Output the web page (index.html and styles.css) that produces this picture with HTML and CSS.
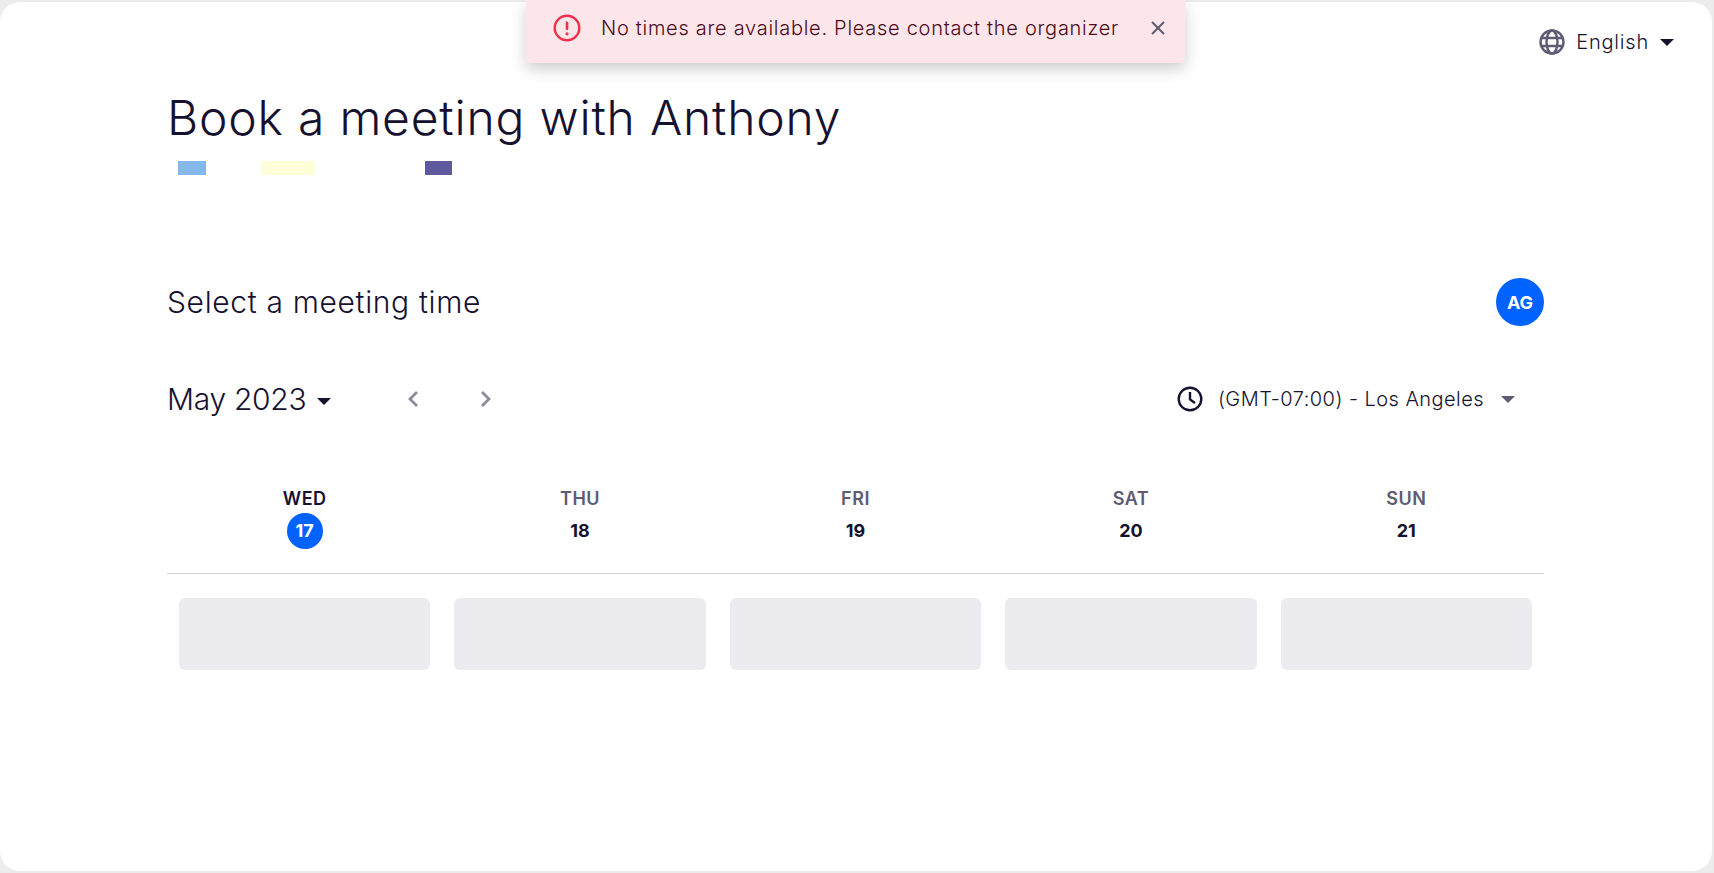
FILE: index.html
```html
<!DOCTYPE html>
<html lang="en">
<head>
    <meta charset="UTF-8">
    <title>Book a meeting with Anthony</title>
    <link rel="stylesheet" href="styles.css">
</head>
<body>

    <div class="card">
        <div class="alert">
            <svg class="alert-icon" viewBox="0 0 28 28" width="28" height="28">
                <circle cx="14" cy="14" r="12.3" fill="none" stroke="#f0304a" stroke-width="2.4"/>
                <rect x="12.7" y="7.5" width="2.6" height="8.5" rx="1.3" fill="#f0304a"/>
                <circle cx="14" cy="19.8" r="1.6" fill="#f0304a"/>
            </svg>
            <span class="alert-text">No times are available. Please contact the organizer</span>
            <svg class="alert-close" viewBox="0 0 14 14" width="14" height="14">
                <path d="M1 1 L13 13 M13 1 L1 13" fill="none" stroke="#5e5b72" stroke-width="2"/>
            </svg>
        </div>

        <div class="lang-bar">
            <svg class="globe" viewBox="0 0 26 26" width="26" height="26">
                <g fill="none" stroke="#5e5b72" stroke-width="2.4">
                    <circle cx="13" cy="13" r="11.5"/>
                    <ellipse cx="13" cy="13" rx="5.5" ry="11.5"/>
                    <path d="M2 9 H24 M2 17 H24"/>
                </g>
            </svg>
            <span class="lang-name">English</span>
            <span class="caret"></span>
        </div>

        <div class="content">
            <h1>Book a meeting with Anthony</h1>
            <div class="redacted">
                <span class="block block-blue"></span>
                <span class="block block-yellow"></span>
                <span class="block block-purple"></span>
            </div>

            <div class="select-row">
                <h2>Select a meeting time</h2>
                <div class="avatar">AG</div>
            </div>

            <div class="month-row">
                <div class="month">May 2023<span class="caret"></span></div>
                <div class="arrows">
                    <svg viewBox="0 0 12 18" width="12" height="18">
                        <path d="M10 2 L3 9 L10 16" fill="none" stroke="#8c8a9b" stroke-width="2.8"/>
                    </svg>
                    <svg viewBox="0 0 12 18" width="12" height="18">
                        <path d="M2 2 L9 9 L2 16" fill="none" stroke="#8c8a9b" stroke-width="2.8"/>
                    </svg>
                </div>
                <div class="timezone">
                    <svg viewBox="0 0 26 26" width="26" height="26">
                        <g fill="none" stroke="#16112f" stroke-width="2.4">
                            <circle cx="13" cy="13" r="11.3"/>
                            <path d="M13 6 V13.5 L18 17"/>
                        </g>
                    </svg>
                    <span>(GMT-07:00) - Los Angeles</span>
                    <span class="caret caret-grey"></span>
                </div>
            </div>

            <div class="days">
                <div class="day active"><div class="day-name">WED</div><div class="day-num">17</div></div>
                <div class="day"><div class="day-name">THU</div><div class="day-num">18</div></div>
                <div class="day"><div class="day-name">FRI</div><div class="day-num">19</div></div>
                <div class="day"><div class="day-name">SAT</div><div class="day-num">20</div></div>
                <div class="day"><div class="day-name">SUN</div><div class="day-num">21</div></div>
            </div>

            <div class="slots">
                <div class="slot"></div>
                <div class="slot"></div>
                <div class="slot"></div>
                <div class="slot"></div>
                <div class="slot"></div>
            </div>
        </div>
    </div>

</body>
</html>
```

FILE: styles.css
```css
html, body {
    height: 100%;
}

body {
    margin: 0;
    padding: 2px 2px 2px 0;
    box-sizing: border-box;
    overflow: hidden;
    background-color: #ececec;
    font-family: Inter, "Liberation Sans", sans-serif;
    color: #16112f;
}

.card {
    position: relative;
    height: 100%;
    background-color: #fff;
    border-radius: 20px;
    box-sizing: border-box;
}

.alert {
    position: absolute;
    top: -2px;
    left: 526px;
    width: 659px;
    height: 63px;
    box-sizing: border-box;
    padding: 0 20px 8px 27px;
    display: flex;
    align-items: center;
    background-color: #fce6e9;
    border-radius: 0 0 4px 4px;
    box-shadow: 0 6px 16px rgba(0, 0, 0, 0.2);
}

.alert-text {
    margin-left: 20px;
    flex: 1;
    font-size: 20px;
    font-weight: 300;
    letter-spacing: 0.72px;
    white-space: nowrap;
    color: #4d0a1a;
}

.lang-bar {
    display: flex;
    align-items: center;
    justify-content: flex-end;
    padding: 27px 38px 0 0;
    height: 26px;
}

.lang-name {
    margin-left: 11px;
    margin-right: 11px;
    font-size: 20px;
    font-weight: 300;
    letter-spacing: 0.8px;
}

.caret {
    display: inline-block;
    width: 0;
    height: 0;
    border-left: 7px solid transparent;
    border-right: 7px solid transparent;
    border-top: 7px solid #16112f;
    vertical-align: middle;
}

.month .caret {
    margin-left: 11px;
}

.caret-grey {
    border-top-color: #5e5b72;
    margin-left: 2px;
}

.content {
    padding: 0 168px 0 167px;
}

h1 {
    margin: 33px 0 0;
    font-size: 48px;
    line-height: 60px;
    font-weight: 300;
    letter-spacing: 0.8px;
}

.redacted {
    display: flex;
    margin-top: 13px;
    height: 14px;
}

.block {
    display: block;
    height: 14px;
}

.block-blue {
    width: 28px;
    margin-left: 11px;
    background-color: #83b8e8;
}

.block-yellow {
    width: 54px;
    margin-left: 55px;
    background-color: #feffd9;
}

.block-purple {
    width: 27px;
    margin-left: 110px;
    background-color: #5f5a9e;
}

.select-row {
    display: flex;
    justify-content: space-between;
    align-items: center;
    margin-top: 103px;
}

h2 {
    margin: 0;
    font-size: 30px;
    font-weight: 300;
    letter-spacing: 0.65px;
}

.avatar {
    width: 48px;
    height: 48px;
    border-radius: 50%;
    background-color: #0062ff;
    color: #fff;
    font-size: 18px;
    font-weight: 700;
    display: flex;
    align-items: center;
    justify-content: center;
}

.month-row {
    display: flex;
    align-items: center;
    margin-top: 49px;
    height: 48px;
}

.month {
    font-size: 30px;
    font-weight: 300;
    letter-spacing: -0.3px;
    width: 240px;
}

.arrows {
    display: flex;
    gap: 61px;
}

.timezone {
    margin-left: auto;
    margin-right: 29px;
    display: flex;
    align-items: center;
    gap: 15px;
    font-size: 20px;
    font-weight: 300;
    letter-spacing: 0.45px;
}

.days {
    display: grid;
    grid-template-columns: repeat(5, 1fr);
    margin-top: 64px;
    padding-bottom: 24px;
    border-bottom: 1px solid #cfcdd6;
    text-align: center;
}

.day-name {
    font-size: 18px;
    font-weight: 600;
    line-height: 24px;
    letter-spacing: 0.5px;
    color: #5e5b72;
}

.day-num {
    width: 36px;
    height: 36px;
    line-height: 36px;
    margin: 2px auto 0;
    font-size: 18px;
    font-weight: 700;
    border-radius: 50%;
}

.active .day-name {
    color: #16112f;
}

.active .day-num {
    background-color: #0062ff;
    color: #fff;
}

.slots {
    display: grid;
    grid-template-columns: repeat(5, 1fr);
    gap: 24px;
    padding: 24px 12px 0;
}

.slot {
    height: 72px;
    background-color: #ecebf0;
    border-radius: 6px;
}
```
